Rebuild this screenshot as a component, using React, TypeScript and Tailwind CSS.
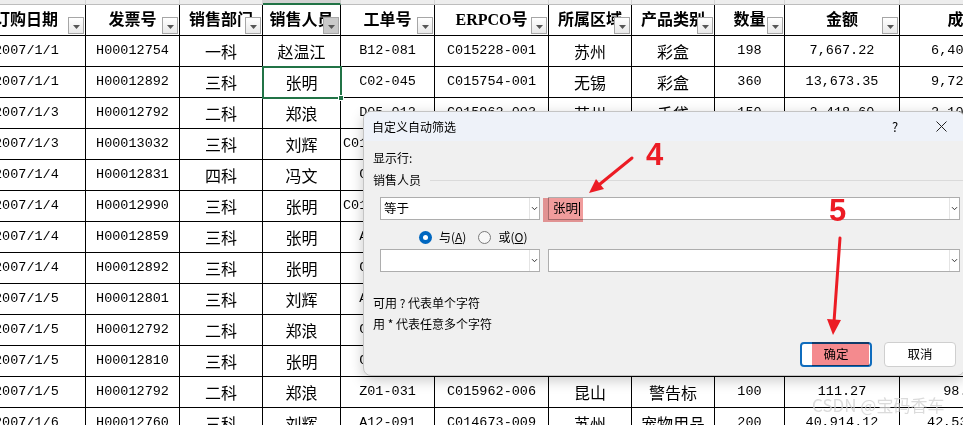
import type { ReactNode } from "react";

const COL_W = [
    "w-[86px]",
    "w-[94px]",
    "w-[83px]",
    "w-[78px]",
    "w-[94px]",
    "w-[114px]",
    "w-[83px]",
    "w-[83px]",
    "w-[70px]",
    "w-[115px]",
    "w-[128px]",
];

const HEADERS = [
    "订购日期",
    "发票号",
    "销售部门",
    "销售人员",
    "工单号",
    "ERPCO号",
    "所属区域",
    "产品类别",
    "数量",
    "金额",
    "成本",
];

const ROWS = [
    ["2007/1/1", "H00012754", "一科", "赵温江", "B12-081", "C015228-001", "苏州", "彩盒", "198", "7,667.22", "6,409.31"],
    ["2007/1/1", "H00012892", "三科", "张明", "C02-045", "C015754-001", "无锡", "彩盒", "360", "13,673.35", "9,725.40"],
    ["2007/1/3", "H00012792", "二科", "郑浪", "D05-012", "C015962-003", "苏州", "手袋", "150", "2,418.60", "2,105.77"],
    ["2007/1/3", "H00013032", "三科", "刘辉", "C01-032,033", "C016011-001", "常州", "彩盒", "240", "5,112.00", "4,380.12"],
    ["2007/1/4", "H00012831", "四科", "冯文", "C07-019", "C015803-002", "苏州", "说明书", "500", "1,250.00", "1,002.45"],
    ["2007/1/4", "H00012990", "三科", "张明", "C01-044,045", "C016009-001", "无锡", "彩盒", "300", "8,820.50", "7,433.10"],
    ["2007/1/4", "H00012859", "三科", "张明", "A11-063", "C015822-004", "昆山", "吊牌", "800", "960.00", "812.36"],
    ["2007/1/4", "H00012892", "三科", "张明", "C02-046", "C015754-002", "无锡", "彩盒", "120", "4,557.78", "3,241.80"],
    ["2007/1/5", "H00012801", "三科", "刘辉", "A12-077", "C015790-001", "苏州", "宠物用品", "60", "3,206.40", "2,880.00"],
    ["2007/1/5", "H00012792", "二科", "郑浪", "C03-015", "C015962-004", "昆山", "警告标", "100", "111.27", "98.52"],
    ["2007/1/5", "H00012810", "三科", "张明", "C05-028", "C015801-003", "无锡", "彩盒", "210", "6,315.90", "5,402.66"],
    ["2007/1/5", "H00012792", "二科", "郑浪", "Z01-031", "C015962-006", "昆山", "警告标", "100", "111.27", "98.52"],
    ["2007/1/6", "H00012760", "三科", "刘辉", "A12-091", "C014673-009", "苏州", "宠物用品", "200", "40,914.12", "42,537.60"],
];

const isCJK = (s: string) => /[\u4e00-\u9fff]/.test(s);

const FilterButton = ({ active }: { active?: boolean }) => (
    <div
        className={
            "absolute right-[1px] bottom-[1px] w-[16px] h-[17px] border border-[#a6a6a6] flex items-end justify-center pb-[4px] " +
            (active ? "bg-[#c9c9c9]" : "bg-gradient-to-b from-white to-[#e9e9e9]")
        }
    >
        <svg width="7" height="4" viewBox="0 0 7 4">
            <path d="M0 0h7L3.5 4z" fill="#555" />
        </svg>
    </div>
);

const Chevron = () => (
    <svg width="7" height="5" viewBox="0 0 7 5">
        <path d="M1 1.2l2.5 2.5L6 1.2" fill="none" stroke="#333" strokeWidth="1" />
    </svg>
);

const Combo = ({ className, children }: { className: string; children?: ReactNode }) => (
    <div className={"h-[23px] bg-white border border-[#adadad] flex shrink-0 " + className}>
        <div className="flex-1 flex items-center pl-[3px] text-[12.5px]">{children}</div>
        <div className="w-[10px] border-l border-[#e4e4e4] flex items-center justify-center">
            <Chevron />
        </div>
    </div>
);

function Sheet() {
    return (
        <div className="w-[963px] overflow-hidden">
            {/* column header strip */}
            <div className="flex h-[5px]">
                {COL_W.map((w, i) => (
                    <div
                        key={i}
                        className={
                            w +
                            " shrink-0 border-r " +
                            (i === 3
                                ? "bg-[#d2d2d2] border-[#c6c6c6] border-b-2 border-b-[#217346]"
                                : "bg-[#ededed] border-[#d4d4d4] border-b border-b-[#bdbdbd]")
                        }
                    />
                ))}
            </div>
            {/* header row */}
            <div className="flex h-[31px]">
                {HEADERS.map((h, i) => (
                    <div
                        key={i}
                        className={
                            COL_W[i] +
                            " shrink-0 relative border-r border-b border-black flex items-center overflow-hidden whitespace-nowrap font-['Liberation_Serif','Noto_Sans_CJK_SC',serif] font-bold text-[16px] " +
                            (i === 0 ? "justify-start" : "justify-center")
                        }
                    >
                        <span className={i === 0 ? "-ml-[6px]" : ""}>{h}</span>
                        <FilterButton active={i === 3} />
                    </div>
                ))}
            </div>
            {ROWS.map((row, r) => (
                <div key={r} className="flex h-[31px]">
                    {row.map((c, i) => (
                        <div
                            key={i}
                            className={
                                COL_W[i] +
                                " shrink-0 border-r border-b border-black flex items-center overflow-hidden whitespace-nowrap " +
                                (i === 0 ? "justify-start " : "justify-center ") +
                                (isCJK(c)
                                    ? "font-['Noto_Sans_CJK_SC',sans-serif] text-[16px]"
                                    : "font-['Liberation_Mono','Noto_Sans_CJK_SC',monospace] text-[13.5px]")
                            }
                        >
                            <span className={i === 0 ? "-ml-[6px]" : ""}>{c}</span>
                        </div>
                    ))}
                </div>
            ))}
        </div>
    );
}

function Dialog() {
    return (
        <div className="absolute left-[363px] top-[111px] w-[602px] h-[265px] rounded-[8px] border border-[#c4c4c4] bg-[#f0f0f0] shadow-[0_4px_14px_rgba(0,0,0,0.22)] overflow-hidden font-['Noto_Sans_CJK_SC','Noto_Sans',sans-serif] text-[12px] text-black">
            <div className="h-[29px] bg-[#eef2f9] flex items-center pl-[8px]">
                <span>自定义自动筛选</span>
                <div className="ml-auto flex">
                    <div className="w-[46px] flex items-center justify-center text-[13px]">?</div>
                    <div className="w-[46px] flex items-center justify-center">
                        <svg width="11" height="11" viewBox="0 0 11 11">
                            <path d="M0.5 0.5l10 10M10.5 0.5l-10 10" stroke="#222" strokeWidth="1" />
                        </svg>
                    </div>
                </div>
            </div>
            <div className="flex flex-col pl-[9px] pr-[7px]">
                <div className="h-[16px] leading-[16px] mt-[9px]">显示行:</div>
                <div className="h-[16px] leading-[16px] mt-[6px] flex items-center">
                    <span>销售人员</span>
                    <div className="flex-1 h-px bg-[#dadada] ml-[9px] -mr-[7px]" />
                </div>
                <div className="flex mt-[9px] ml-[7px] gap-[8px]">
                    <Combo className="w-[160px]">等于</Combo>
                    <Combo className="w-[412px]">
                        <span className="pl-[1px]">张明</span>
                        <span className="w-px h-[14px] bg-black ml-[1px]" />
                    </Combo>
                </div>
                <div className="h-[16px] mt-[9px] flex items-center ml-[46px]">
                    <div className="w-[13px] h-[13px] rounded-full bg-[#0067c0] flex items-center justify-center">
                        <div className="w-[5px] h-[5px] rounded-full bg-white" />
                    </div>
                    <span className="ml-[7px]">
                        与(<u>A</u>)
                    </span>
                    <div className="w-[13px] h-[13px] rounded-full border border-[#7a7a7a] bg-[#f8f8f8] ml-[12px]" />
                    <span className="ml-[7px]">
                        或(<u>O</u>)
                    </span>
                </div>
                <div className="flex mt-[4px] ml-[7px] gap-[8px]">
                    <Combo className="w-[160px]" />
                    <Combo className="w-[412px]" />
                </div>
                <div className="h-[16px] leading-[16px] mt-[23px]">可用 ? 代表单个字符</div>
                <div className="h-[16px] leading-[16px] mt-[5px]">用 * 代表任意多个字符</div>
                <div className="flex justify-end gap-[12px] mt-[10px] mr-[1px]">
                    <div className="w-[72px] h-[25px] rounded-[4px] border-2 border-[#0f6cbd] bg-white flex items-center justify-center text-[12.5px]">
                        确定
                    </div>
                    <div className="w-[72px] h-[25px] rounded-[4px] border border-[#cfcfcf] bg-white flex items-center justify-center text-[12.5px]">
                        取消
                    </div>
                </div>
            </div>
        </div>
    );
}

function Annotations() {
    return (
        <>
            {/* highlight marks */}
            <div className="absolute left-[543px] top-[198px] w-[40px] h-[24px] bg-[#f09c9c] mix-blend-multiply" />
            <div className="absolute left-[812px] top-[342px] w-[57px] h-[24px] bg-[#f48a8e] mix-blend-multiply" />
            <svg className="absolute left-0 top-0 pointer-events-none" width="963" height="425" viewBox="0 0 963 425">
                <line x1="632" y1="158" x2="600" y2="184" stroke="#ec1c24" strokeWidth="3" strokeLinecap="round" />
                <polygon points="589,193 604,189 596,179" fill="#ec1c24" />
                <line x1="840" y1="238" x2="834" y2="322" stroke="#ec1c24" strokeWidth="3" strokeLinecap="round" />
                <polygon points="833,335 841,320 827,319" fill="#ec1c24" />
            </svg>
            <div className="absolute left-[646px] top-[139px] font-['Liberation_Sans',Arial,sans-serif] font-bold text-[31px] leading-none text-[#ec1c24]">
                4
            </div>
            <div className="absolute left-[829px] top-[195px] font-['Liberation_Sans',Arial,sans-serif] font-bold text-[31px] leading-none text-[#ec1c24]">
                5
            </div>
            <div className="absolute left-[812px] top-[395px] font-['Noto_Sans_CJK_SC',sans-serif] text-[17px] leading-[20px] text-[#d2d2d2]/80">
                CSDN @宝码香车
            </div>
        </>
    );
}

export default function App() {
    return (
        <div className="relative w-[963px] h-[425px] overflow-hidden bg-white text-black">
            <Sheet />
            {/* active cell */}
            <div className="absolute left-[262px] top-[66px] w-[80px] h-[33px] border-2 border-[#217346]" />
            <div className="absolute left-[338px] top-[95px] w-[6px] h-[6px] bg-[#217346] border border-white" />
            <Dialog />
            <Annotations />
        </div>
    );
}
